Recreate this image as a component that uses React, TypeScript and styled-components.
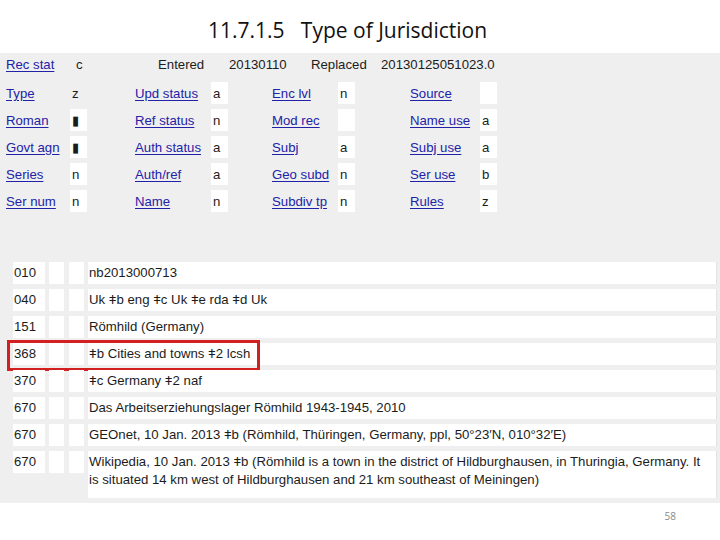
import { FC } from 'react';
import styled, { createGlobalStyle } from 'styled-components';

const GlobalStyle = createGlobalStyle`
	html, body {
		margin: 0;
		padding: 0;
		background: #ffffff;
	}
	body {
		font-family: 'Liberation Sans', Arial, sans-serif;
	}
`;

type FixedField = { label: string; value: string; boxed: boolean };

const fixedRows: FixedField[][] = [
	[
		{ label: 'Type', value: 'z', boxed: false },
		{ label: 'Upd status', value: 'a', boxed: true },
		{ label: 'Enc lvl', value: 'n', boxed: true },
		{ label: 'Source', value: '', boxed: true },
	],
	[
		{ label: 'Roman', value: '\u25AE', boxed: true },
		{ label: 'Ref status', value: 'n', boxed: true },
		{ label: 'Mod rec', value: '', boxed: true },
		{ label: 'Name use', value: 'a', boxed: true },
	],
	[
		{ label: 'Govt agn', value: '\u25AE', boxed: true },
		{ label: 'Auth status', value: 'a', boxed: true },
		{ label: 'Subj', value: 'a', boxed: true },
		{ label: 'Subj use', value: 'a', boxed: true },
	],
	[
		{ label: 'Series', value: 'n', boxed: true },
		{ label: 'Auth/ref', value: 'a', boxed: true },
		{ label: 'Geo subd', value: 'n', boxed: true },
		{ label: 'Ser use', value: 'b', boxed: true },
	],
	[
		{ label: 'Ser num', value: 'n', boxed: true },
		{ label: 'Name', value: 'n', boxed: true },
		{ label: 'Subdiv tp', value: 'n', boxed: true },
		{ label: 'Rules', value: 'z', boxed: true },
	],
];

type VarField = { tag: string; data: string; highlight?: boolean; tall?: boolean };

const varFields: VarField[] = [
	{ tag: '010', data: 'nb2013000713' },
	{ tag: '040', data: 'Uk \u01C2b eng \u01C2c Uk \u01C2e rda \u01C2d Uk' },
	{ tag: '151', data: 'Römhild (Germany)' },
	{ tag: '368', data: '\u01C2b Cities and towns \u01C22 lcsh', highlight: true },
	{ tag: '370', data: '\u01C2c Germany \u01C22 naf' },
	{ tag: '670', data: 'Das Arbeitserziehungslager Römhild 1943-1945, 2010' },
	{
		tag: '670',
		data: 'GEOnet, 10 Jan. 2013 \u01C2b (Römhild, Thüringen, Germany, ppl, 50°23\u2032N, 010°32\u2032E)',
	},
	{
		tag: '670',
		data: 'Wikipedia, 10 Jan. 2013 \u01C2b (Römhild is a town in the district of Hildburghausen, in Thuringia, Germany. It is situated 14 km west of Hildburghausen and 21 km southeast of Meiningen)',
		tall: true,
	},
];

const App: FC = () => {
	return (
		<Root>
			<GlobalStyle />
			<Title>11.7.1.5&nbsp;&nbsp; Type of Jurisdiction</Title>
			<Panel>
				<FixedBlock>
					<HeaderRow>
						<FieldLink>Rec stat</FieldLink>
						<Plain>c</Plain>
						<Plain>Entered</Plain>
						<Plain>20130110</Plain>
						<Plain>Replaced</Plain>
						<Plain>20130125051023.0</Plain>
					</HeaderRow>
					{fixedRows.map((row, i) => (
						<FieldRow key={i}>
							{row.map((f) => (
								<FieldPair key={f.label}>
									<FieldLink>{f.label}</FieldLink>
									<ValueBox $boxed={f.boxed}>{f.value}</ValueBox>
								</FieldPair>
							))}
						</FieldRow>
					))}
				</FixedBlock>
				<VarBlock>
					{varFields.map((f, i) => (
						<VarRow key={i}>
							<TagCell>{f.tag}</TagCell>
							<IndCell />
							<IndCell />
							<DataCell $tall={f.tall}>{f.data}</DataCell>
							{f.highlight && <Highlight />}
						</VarRow>
					))}
				</VarBlock>
			</Panel>
			<Footer>
				<PageNum>58</PageNum>
			</Footer>
		</Root>
	);
};

const Root = styled.div`
	width: 720px;
	height: 540px;
	display: flex;
	flex-direction: column;
	background: #ffffff;
	overflow: hidden;
`;

const Title = styled.h1`
	margin: 0;
	height: 53px;
	box-sizing: border-box;
	padding: 16px 25px 0 0;
	text-align: center;
	font-family: 'Open Sans', 'Noto Sans', sans-serif;
	font-weight: 400;
	font-size: 21px;
	line-height: 28px;
	color: #111111;
`;

const Panel = styled.div`
	height: 450px;
	background: #efefef;
	display: flex;
	flex-direction: column;
	font-size: 13.2px;
	color: #1c1c1c;
`;

const FixedBlock = styled.div`
	display: flex;
	flex-direction: column;
	gap: 5px;
	padding: 0 0 0 6px;
`;

const HeaderRow = styled.div`
	display: grid;
	grid-template-columns: 70px 82px 71px 82px 70px auto;
	height: 22px;
	margin-bottom: 2px;
	align-items: center;
`;

const FieldRow = styled.div`
	display: grid;
	grid-template-columns: 129px 137px 138px 90px;
	height: 22px;
`;

const FieldPair = styled.div`
	display: flex;
	align-items: center;

	&:nth-child(1) a { width: 64px; }
	&:nth-child(2) a { width: 76px; }
	&:nth-child(3) a { width: 66px; }
	&:nth-child(4) a { width: 70px; }
`;

const FieldLink = styled.a`
	flex: none;
	color: #2222a8;
	text-decoration: underline;
	text-underline-offset: 2px;
	white-space: nowrap;
	cursor: pointer;
`;

const Plain = styled.span`
	white-space: nowrap;
`;

const ValueBox = styled.span<{ $boxed: boolean }>`
	width: 17px;
	height: 22px;
	box-sizing: border-box;
	padding-left: 2px;
	display: flex;
	align-items: center;
	background: ${(p) => (p.$boxed ? '#ffffff' : 'transparent')};
`;

const VarBlock = styled.div`
	margin-top: 50px;
	display: flex;
	flex-direction: column;
	gap: 5px;
	padding: 0 3px 0 13px;
`;

const VarRow = styled.div`
	position: relative;
	display: flex;
	align-items: flex-start;
	gap: 4px;
`;

const TagCell = styled.div`
	width: 32px;
	height: 22px;
	box-sizing: border-box;
	padding-left: 1px;
	line-height: 22px;
	background: #ffffff;
`;

const IndCell = styled.div`
	width: 15px;
	height: 22px;
	background: #ffffff;

	& + & {
		margin-left: 1px;
	}
`;

const DataCell = styled.div<{ $tall?: boolean }>`
	flex: 1;
	min-height: 22px;
	box-sizing: border-box;
	padding: ${(p) => (p.$tall ? '2px 10px 10px 1px' : '2px 10px 2px 1px')};
	line-height: 17.5px;
	background: #ffffff;
	border-right: 1px solid #e2e2e2;
`;

const Highlight = styled.div`
	position: absolute;
	left: -6px;
	top: -3px;
	width: 253px;
	height: 31px;
	box-sizing: border-box;
	border: 3px solid #d21f1f;
	pointer-events: none;
`;

const Footer = styled.div`
	flex: 1;
	display: flex;
	justify-content: flex-end;
	padding: 6px 44px 0 0;
`;

const PageNum = styled.span`
	font-family: 'Open Sans', 'Noto Sans', sans-serif;
	font-size: 10px;
	color: #8a8a8a;
`;

export default App;
